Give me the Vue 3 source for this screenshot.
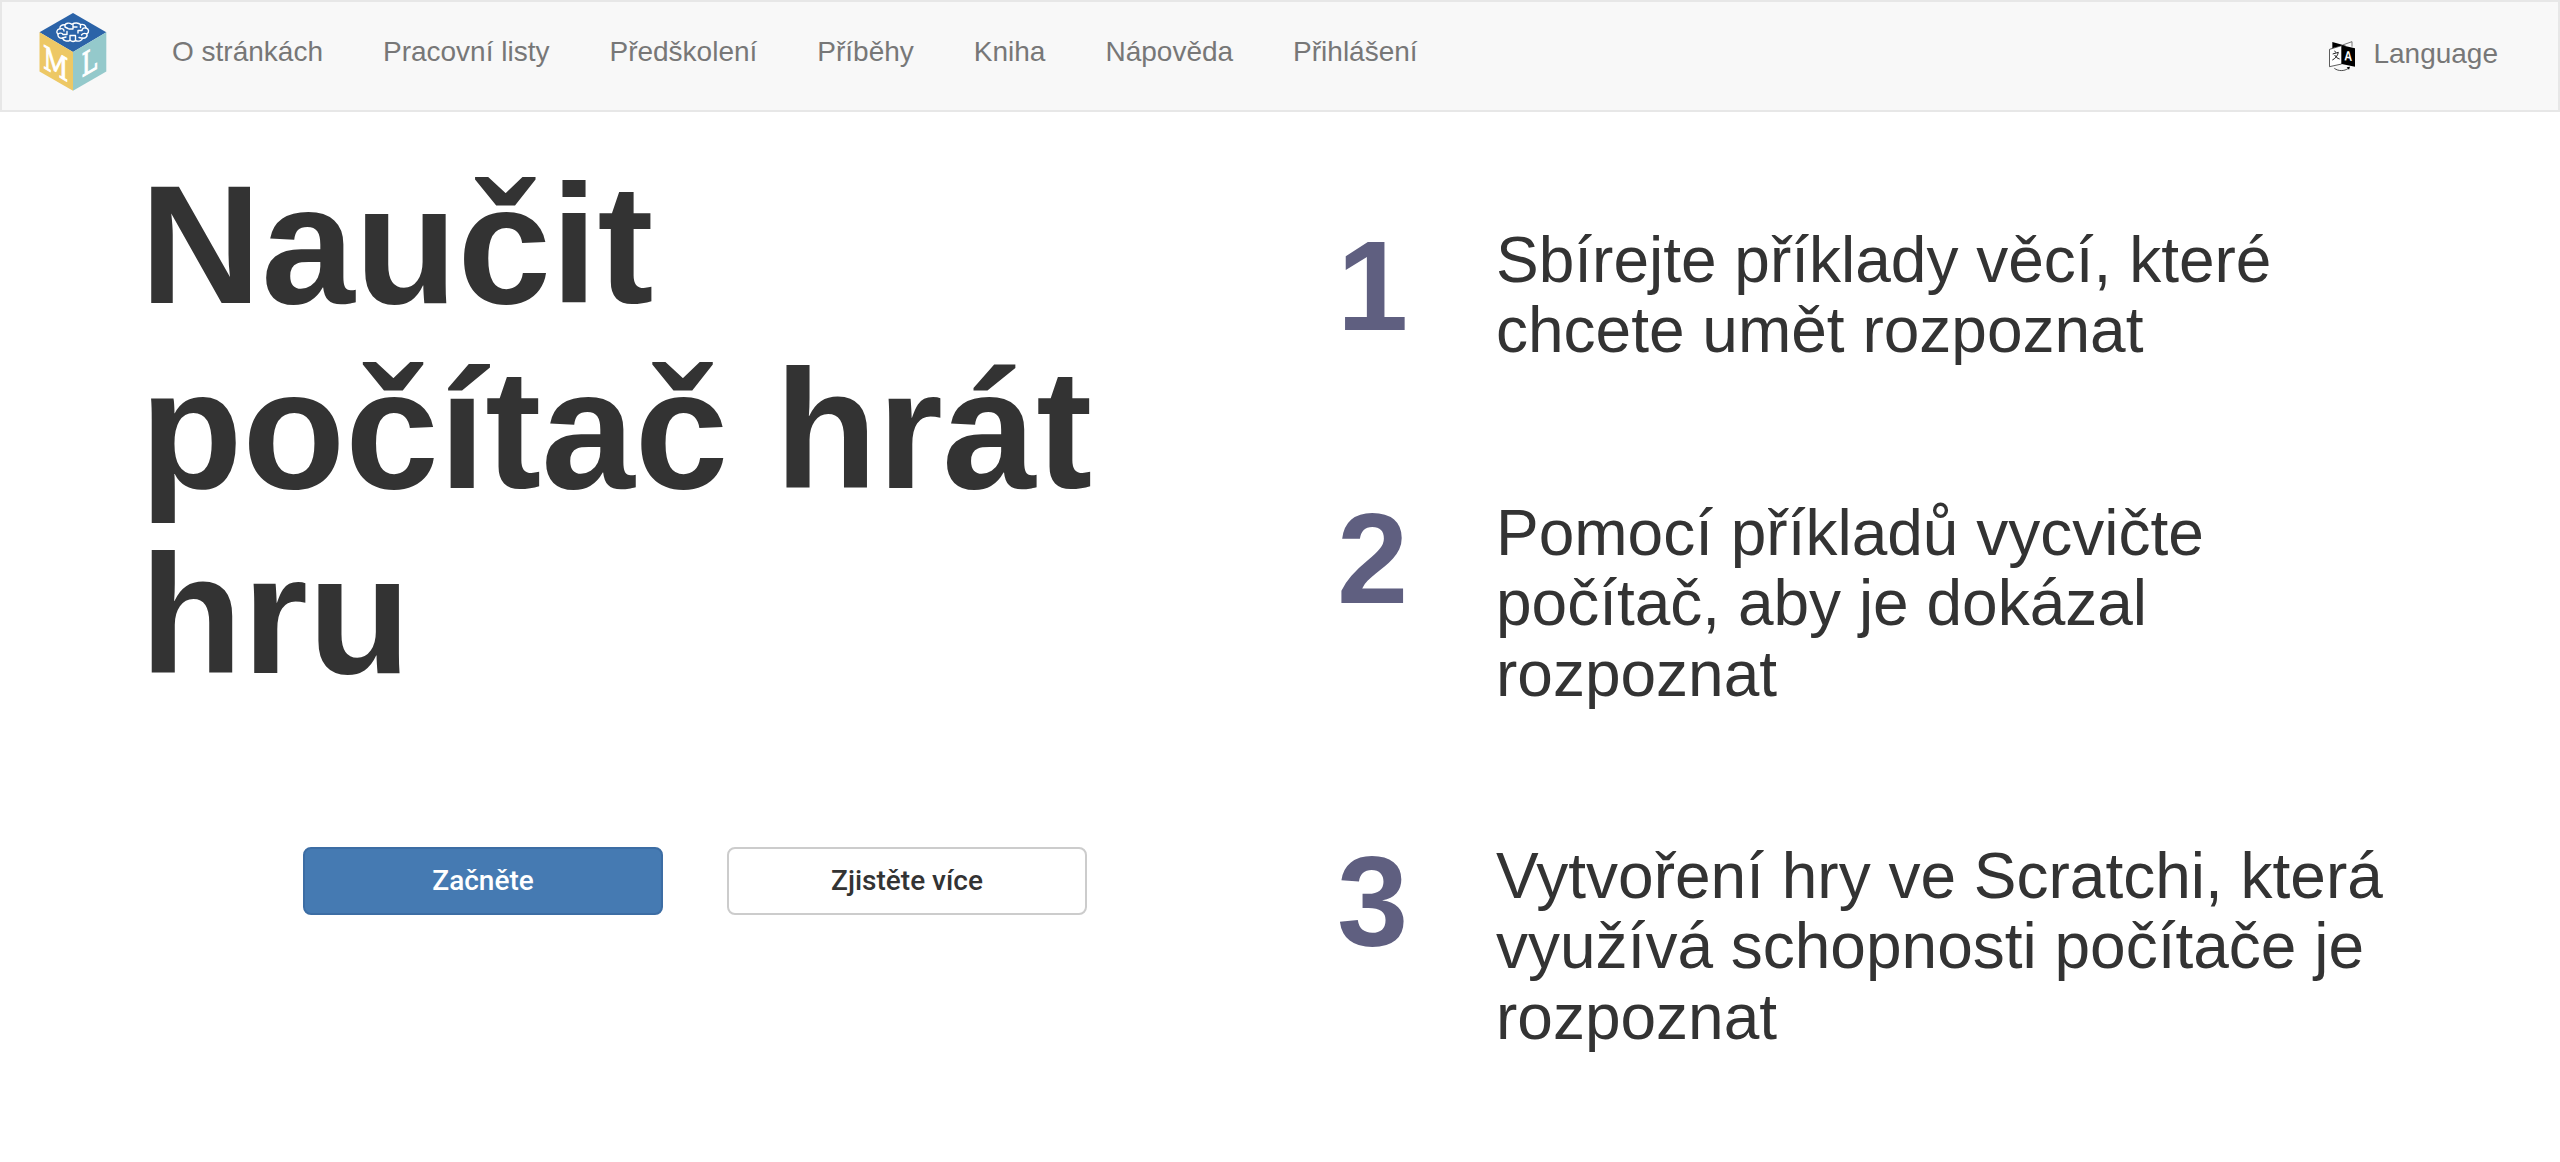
<script setup>
const links = ['O stránkách', 'Pracovní listy', 'Předškolení', 'Příběhy', 'Kniha', 'Nápověda', 'Přihlášení']
const title = ['Naučit', 'počítač hrát', 'hru']
const steps = [
  ['Sbírejte příklady věcí, které', 'chcete umět rozpoznat'],
  ['Pomocí příkladů vycvičte', 'počítač, aby je dokázal', 'rozpoznat'],
  ['Vytvoření hry ve Scratchi, která', 'využívá schopnosti počítače je', 'rozpoznat'],
]
</script>

<template>
  <div class="page">
    <header class="navbar">
      <a class="brand">
        <svg width="68" height="78" viewBox="0 0 68 78">
          <path d="M34 0 67.3 19.3 34 39 .5 19.3Z" fill="#2b63a8" />
          <path d="M.5 19.3 34 39V77.8L.5 58.5Z" fill="#edc865" />
          <path d="M67.3 19.3 34 39V77.8L67.3 58.5Z" fill="#94c9cb" />
          <g fill="none" stroke="#fff" stroke-width="1.4" stroke-linecap="round" stroke-linejoin="round">
            <path d="M33 11.3C30 9.5 27 10 26 11.8 22.500 11.500 20.500 13.500 21 15.600 17.500 16.500 17 19.500 19 21 18.500 23.500 20.500 25.500 23.500 25.300 24.500 28 28.500 28.800 31 27.300 32.500 28.500 35 28.700 36.500 27.600 39.500 29 43 27.500 43.500 25.300 47 25.500 48.700 23 47.800 20.800 50.500 19 50 15.800 47 15 46.800 12 44 10.800 41.500 11.600 39.500 9.700 35.500 9.500 33 11.300Z" />
            <path d="M34 11.500V16H30M34 14H38M31 27V22.500H36.500M36.500 27.500V23M21 16C23 15 25 16 25 18M19 21C21 19.500 23 20 24 21.500H28V18.500M26 12V14L29 15.500M23.500 25 27 24M47 15C44.500 14.500 43 15.500 43 17.500H39V20M47.800 20.800C45.500 20 43.500 20.500 42.500 22M43.500 25.300 40 24.500M41.500 12V14.500" />
          </g>
          <text class="cube-letter" transform="matrix(.77 .45 0 1 4 54.500)">M</text>
          <text class="cube-letter" transform="matrix(.74 -.43 0 1 42.500 64.500)">L</text>
        </svg>
      </a>
      <nav class="links">
        <a v-for="link in links" :key="link">{{ link }}</a>
      </nav>
      <a class="language">
        <svg width="26" height="31" viewBox="87 63 78 93">
          <path d="M97 66 140 78 125 77 97 85Z" fill="#000" />
          <path d="M128 75 156 65V80" fill="none" stroke="#333" stroke-width="2" />
          <path d="M88.500 88 125 77V132L88.500 140Z" fill="#fff" stroke="#222" stroke-width="2.200" />
          <path d="M125 76 165 85V140L125 132Z" fill="#000" />
          <path d="M103 93 108 97M98 102 115 97C113 107 106 116 97 120M104 105C108 112 112 115 119 117" fill="none" stroke="#111" stroke-width="2.800" />
          <text x="0" y="0" class="icon-letter" transform="matrix(.8 .08 0 1 132.500 121)">A</text>
          <path d="M103 145C115 154 133 154 145 145" fill="none" stroke="#222" stroke-width="2.400" />
          <path d="M140 142 150 140 147 149Z" fill="#000" />
        </svg>
        <span>Language</span>
      </a>
    </header>

    <main class="content">
      <section class="intro">
        <h1><span v-for="line in title" :key="line" class="line">{{ line }}</span></h1>
        <div class="actions">
          <button class="btn primary">Začněte</button>
          <button class="btn">Zjistěte více</button>
        </div>
      </section>
      <section class="steps">
        <div v-for="(step, i) in steps" :key="i" class="step">
          <div class="number">{{ i + 1 }}</div>
          <p><span v-for="line in step" :key="line" class="line">{{ line }}</span></p>
        </div>
      </section>
    </main>
  </div>
</template>

<style>
body { background: #fff; }
</style>

<style scoped>
* { box-sizing: border-box; }
.page {
  width: 2560px;
  height: 1162px;
  overflow: hidden;
  font-family: "Liberation Sans", Arial, sans-serif;
  color: #333;
}
.navbar {
  display: flex;
  align-items: flex-start;
  height: 112px;
  border: 2px solid #e7e7e7;
  background: #f8f8f8;
  color: #777;
  font-size: 28px;
  line-height: 40px;
}
.brand { display: block; margin: 11px 0 0 37px; width: 68px; height: 78px; }
.brand svg, .language svg { display: block; }
.cube-letter { font: 32px "DejaVu Serif", serif; fill: #fff; stroke: #fff; stroke-width: 1px; }
.icon-letter { font: bold 41px "Liberation Sans", sans-serif; fill: #fff; }
.links { display: flex; gap: 60px; margin: 30px 0 0 65px; white-space: nowrap; }
.language { display: flex; gap: 18px; margin: 32px 60px 0 auto; }
.language svg { margin-top: 7px; }
.content { display: flex; }
.intro { width: 1336px; padding: 41px 0 0 140px; }
h1 { margin: 0; font-size: 168px; line-height: 184.800px; font-weight: 700; }
.line { display: block; white-space: nowrap; }
.actions { display: flex; gap: 64px; margin: 139.600px 0 0 163px; }
.btn {
  width: 360px;
  height: 68px;
  padding: 0;
  border: 2px solid #ccc;
  border-radius: 8px;
  background: #fff;
  color: #333;
  font: 500 28px/40px Roboto, sans-serif;
}
.btn.primary { background: #457ab2; border-color: #3c6da4; color: #fff; }
.steps { display: flex; flex-direction: column; gap: 132px; padding-top: 113px; }
.step { display: flex; align-items: flex-start; }
.number {
  width: 159px;
  height: 132px;
  margin: -9px 0 0 1px;
  color: #5f5f80;
  font-size: 128px;
  font-weight: 700;
  line-height: 140.800px;
}
p { margin: 0; font-size: 64px; line-height: 70.400px; }
</style>
